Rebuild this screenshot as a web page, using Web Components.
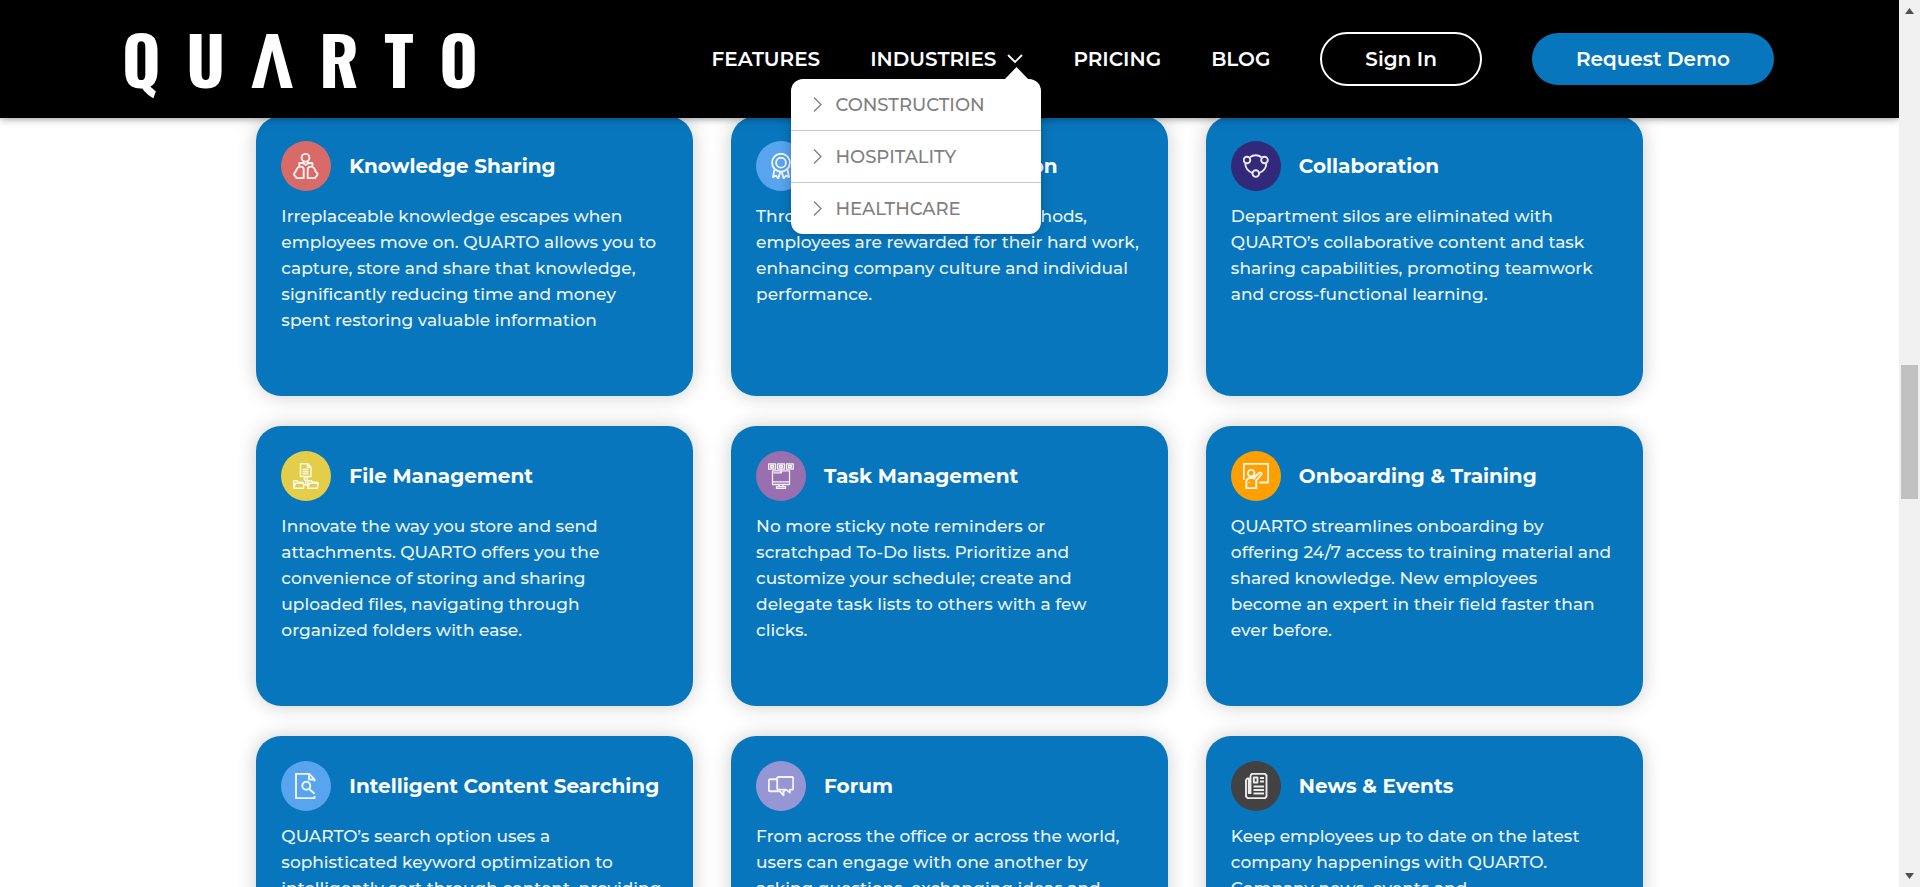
<!DOCTYPE html>
<html lang="en">
<head>
<meta charset="utf-8">
<meta name="viewport" content="width=device-width, initial-scale=1">
<title>QUARTO – Features</title>
<style>
  body { margin: 0; font-family: Montserrat, Inter, sans-serif; background: #fff; }
</style>
</head>
<body>
<quarto-page>
  <quarto-header slot="header"></quarto-header>

  <feature-card icon="knowledge" tint="#d86b68">
    <span slot="title">Knowledge Sharing</span>
    Irreplaceable knowledge escapes when<br>employees move on. QUARTO allows you to<br>capture, store and share that knowledge,<br>significantly reducing time and money<br>spent restoring valuable information
  </feature-card>
  <feature-card icon="award" tint="#58a4ee">
    <span slot="title">Reward &amp; Recognition</span>
    Through various recognition methods,<br>employees are rewarded for their hard work,<br>enhancing company culture and individual<br>performance.
  </feature-card>
  <feature-card icon="collaboration" tint="#33297b">
    <span slot="title">Collaboration</span>
    Department silos are eliminated with<br>QUARTO’s collaborative content and task<br>sharing capabilities, promoting teamwork<br>and cross-functional learning.
  </feature-card>

  <feature-card icon="files" tint="#e4ce49">
    <span slot="title">File Management</span>
    Innovate the way you store and send<br>attachments. QUARTO offers you the<br>convenience of storing and sharing<br>uploaded files, navigating through<br>organized folders with ease.
  </feature-card>
  <feature-card icon="tasks" tint="#9870b0">
    <span slot="title">Task Management</span>
    No more sticky note reminders or<br>scratchpad To-Do lists. Prioritize and<br>customize your schedule; create and<br>delegate task lists to others with a few<br>clicks.
  </feature-card>
  <feature-card icon="training" tint="#ffa000">
    <span slot="title">Onboarding &amp; Training</span>
    QUARTO streamlines onboarding by<br>offering 24/7 access to training material and<br>shared knowledge. New employees<br>become an expert in their field faster than<br>ever before.
  </feature-card>

  <feature-card icon="search" tint="#58a4ee">
    <span slot="title">Intelligent Content Searching</span>
    QUARTO’s search option uses a<br>sophisticated keyword optimization to<br>intelligently sort through content, providing
  </feature-card>
  <feature-card icon="forum" tint="#9796d4">
    <span slot="title">Forum</span>
    From across the office or across the world,<br>users can engage with one another by<br>asking questions, exchanging ideas and
  </feature-card>
  <feature-card icon="news" tint="#424242">
    <span slot="title">News &amp; Events</span>
    Keep employees up to date on the latest<br>company happenings with QUARTO.<br>Company news, events and
  </feature-card>
</quarto-page>

<script>
const define = (name, html, setup) => {
  const template = document.createElement('template');
  template.innerHTML = html;
  customElements.define(name, class extends HTMLElement {
    constructor() {
      super();
      this.attachShadow({ mode: 'open' }).append(template.content.cloneNode(true));
    }
    connectedCallback() { if (setup) setup(this, this.shadowRoot); }
  });
};

const icons = {
  knowledge: '<circle cx="12.5" cy="4.8" r="3.9"/><path d="M6.3 13.5V10H10l2.700 2 2.700-2h4v3.500M10.500 8.500v3M15 8.500v3"/><path d="M10.700 25v-8.500c0-1.800-1-2.900-2.800-2.900-3 0-4.300 2-5.100 4.700L1 20.800c0 1.500.8 2.500 1.800 2.900l.8 1.500zM14.700 25v-8.500c0-1.800 1-2.900 2.800-2.900 3 0 4.300 2 5.100 4.700l2 2.500c0 1.500-.8 2.500-1.800 2.900l-.8 1.500z"/>',
  award: '<circle cx="13" cy="9.700" r="8.900"/><circle cx="13" cy="9.700" r="4.900"/><path d="M6.500 16.500L5 24l3.200-1.300L10.300 25.500l2-6.800M19.500 16.500L21 24l-3.200-1.300-2.100 2.800-2-6.800"/>',
  collaboration: '<circle cx="4" cy="7" r="3.300"/><circle cx="21.500" cy="7" r="3.300"/><circle cx="12.800" cy="20.600" r="3.300"/><path d="M7 4.200c3-2.600 8.400-2.600 11.500 0M2.400 10.200c-.6 4 2.600 8.200 6.900 9.600M23.200 10.200c.6 4-2.600 8.200-6.900 9.600"/>',
  files: '<path stroke-width="1.400" d="M7.500 13.500V.8h7.200l3.300 3.400v9.300zM14.500.8v3.600H18M9.500 6.500h6M9.500 8.700h6M9.500 10.900h6"/><circle cx="12.800" cy="15.700" r="1.600" stroke-width="1.400"/><path stroke-width="1.400" d="M12.800 17.400v4.800M10.500 22h5M.7 25.300V17.800h3.500l1.300 1.500h4v1.500M.7 25.300l1.900-5h8v5zM14.700 25.300l1.900-5h8.600l-1 5zM14.900 24V17.800h3.500l1.300 1.500h4.500v1"/>',
  tasks: '<path stroke-width="1.300" d="M.7.800h6.800v5.400H.7zM9.600.800h6.800v5.400H9.600zM18.500.800h6.800v5.400h-6.800zM2.700 2.500h2.800v2H2.700zM11.600 2.500h2.800v2h-2.800zM20.500 2.500h2.800v2h-2.800zM13 6.200v3M4.500 7.800h17v13.700h-17zM4.500 18.800h17M5.500 9.800h8V7.800M11 21.500v2M15 21.500v2M8.500 23.600h9v1.800h-9z"/>',
  training: '<path d="M.8 17V.8h24.400v18.700H16"/><circle cx="8.200" cy="10.200" r="3.300"/><path d="M3.300 25.200V19c0-2.400 1.700-4 4-4h3.400l5.600-5.200c1.500-1 2.900.4 2 1.900l-5 5.600v7.900zM10.500 14.800l1.500 1.500M6.300 19v1"/>',
  search: '<path d="M21.500 8.500V6.300L16.200.800H3v24.400h18.500V23M16 .8v5.700h5.500"/><circle cx="13.300" cy="12.700" r="4"/><path d="M16 15.800l5.500 5"/>',
  forum: '<path d="M17.500 16.200l-.500 1.300-1.500.8v4l-3.500-4H1.500L.8 17.500V7l1-.8h7"/><path d="M10 4h14.500l.7.800v11l-.7.800H22l-.3 3-3.500-3H10l-.8-.8v-11z"/>',
  news: '<path d="M7.500 2.500L9 .8h13l1.500 1.700v21L22 25.200H5L3 23.500V7l1.300-1.500h1.500V21M7.500 2.500V21"/><path d="M10.800 4.500h3.700v5h-3.700zM17 5h4M17 8.500h4M10.500 13.500H21M10.500 17H21M10.500 20.500H21"/>'
};

define('feature-icon', `
  <style>
    :host { display: grid; place-items: center; width: 50px; height: 50px; border-radius: 50%; flex: none; }
    svg { width: 26px; height: 26px; fill: none; stroke: #fff; stroke-width: 1.900; stroke-linejoin: round; opacity: .9; }
  </style>
  <svg viewBox="0 0 26 26" aria-hidden="true"></svg>`,
  (el, root) => {
    root.querySelector('svg').innerHTML = icons[el.getAttribute('name')];
    el.style.background = el.getAttribute('tint');
  });

define('feature-card', `
  <style>
    :host { display: block; box-sizing: border-box; min-height: 280px; padding: 25px;
            border-radius: 25px; background: #0876bd; color: #fff; box-shadow: 0 0 20px rgba(0,0,0,.2); }
    header { display: flex; align-items: center; gap: 18px; }
    h3 { margin: 0; font-size: 20px; line-height: 26px; font-weight: 700; white-space: nowrap; }
    p { margin: 12px 0 0; font-size: 17px; line-height: 26px; font-weight: 500; color: #eaf4fb; white-space: nowrap; }
  </style>
  <header><h3><slot name="title"></slot></h3></header>
  <p><slot></slot></p>`,
  (el, root) => {
    root.querySelector('header').insertAdjacentHTML('afterbegin',
      `<feature-icon name="${el.getAttribute('icon')}" tint="${el.getAttribute('tint')}"></feature-icon>`);
  });

define('quarto-logo', `
  <style>
    :host { display: block; padding-top: 2px; }
    a { display: flex; align-items: baseline; justify-content: space-between; width: 356px;
        color: #fff; text-decoration: none; font: 700 66px/80px Oswald, "Roboto Condensed", sans-serif; }
    .peak { font-family: "Roboto Condensed", sans-serif; font-size: 76px; }
  </style>
  <a href="#" aria-label="QUARTO"><span>Q</span><span>U</span><span class="peak">Λ</span><span>R</span><span>T</span><span>O</span></a>`);

define('industries-menu', `
  <style>
    :host { display: block; width: 250px; border-radius: 12px; background: #fff; box-shadow: 0 0 12px rgba(0,0,0,.25); }
    .tip { position: absolute; right: 12px; bottom: 100%; width: 25px; height: 13px; margin-bottom: -1px; fill: #fff; }
    ul { margin: 0; padding: 0; list-style: none; }
    li + li { border-top: 1px solid #c8c8c8; }
    a { display: flex; align-items: center; gap: 13px; height: 51px; padding: 0 22px;
        color: #7f7f7f; font-size: 18px; font-weight: 500; text-decoration: none; }
    a svg { width: 9px; height: 15px; fill: none; stroke: #7f7f7f; stroke-width: 1.300; }
  </style>
  <svg class="tip" viewBox="0 0 25 13" aria-hidden="true"><path d="M0 13L12.500 0 25 13z"/></svg>
  <ul></ul>`,
  (el, root) => {
    root.querySelector('ul').innerHTML = ['CONSTRUCTION', 'HOSPITALITY', 'HEALTHCARE'].map(name =>
      `<li><a href="#"><svg viewBox="0 0 9 15" aria-hidden="true"><path d="M1 .5l7 7-7 7"/></svg>${name}</a></li>`).join('');
  });

define('quarto-header', `
  <style>
    :host { display: flex; align-items: center; justify-content: space-between; box-sizing: border-box;
            height: 118px; padding: 0 125px 0 122px; background: #000; box-shadow: 0 0 8px rgba(0,0,0,.5); }
    nav { display: flex; align-items: center; gap: 50px; font-size: 20px; line-height: 24px; font-weight: 600; }
    nav a { color: #fff; text-decoration: none; white-space: nowrap; }
    .drop { position: relative; }
    .drop > a { display: flex; align-items: center; gap: 11px; }
    .drop > a svg { width: 16px; height: 10px; fill: none; stroke: #fff; stroke-width: 1.800; }
    industries-menu { position: absolute; right: -18px; top: 32px; }
    button { padding: 14px 44px; border: 0; border-radius: 28px; background: #0876bd; color: #fff;
             font: inherit; white-space: nowrap; cursor: pointer; }
    button.outline { border: 2px solid #fff; background: none; padding: 13px 43px; }
  </style>
  <quarto-logo></quarto-logo>
  <nav>
    <a href="#">FEATURES</a>
    <div class="drop">
      <a href="#">INDUSTRIES <svg viewBox="0 0 16 10" aria-hidden="true"><path d="M1 1l7 7 7-7"/></svg></a>
      <industries-menu></industries-menu>
    </div>
    <a href="#">PRICING</a>
    <a href="#">BLOG</a>
    <button class="outline" type="button">Sign In</button>
    <button type="button">Request Demo</button>
  </nav>`);

define('page-scrollbar', `
  <style>
    :host { display: flex; flex-direction: column; align-items: center; justify-content: space-between;
            background: #f1f1f1; padding: 8px 2px; box-sizing: border-box; }
    svg { width: 9px; height: 6px; fill: #505050; flex: none; }
    .track { flex: 1; width: 17px; display: grid; grid-template-rows: 351fr 134fr 374fr; }
    .thumb { grid-row: 2; background: #c1c1c1; }
  </style>
  <svg viewBox="0 0 9 6" aria-hidden="true"><path d="M4.500 0L9 6H0z"/></svg>
  <div class="track"><div class="thumb"></div></div>
  <svg viewBox="0 0 9 6" aria-hidden="true"><path d="M0 0h9L4.500 6z"/></svg>`);

define('quarto-page', `
  <style>
    :host { display: grid; grid-template-columns: minmax(0, 1fr) 21px; height: 100vh; overflow: hidden; }
    .view { display: flex; flex-direction: column; overflow: hidden; min-height: 0; }
    .top { position: relative; z-index: 1; flex: none; }
    main { display: grid; grid-template-columns: repeat(3, minmax(0, 1fr)); gap: 30px 38px;
           width: 73%; max-width: 1387px; margin: -2px auto 0; }
  </style>
  <div class="view">
    <div class="top"><slot name="header"></slot></div>
    <main><slot></slot></main>
  </div>
  <page-scrollbar></page-scrollbar>`);
</script>
</body>
</html>
